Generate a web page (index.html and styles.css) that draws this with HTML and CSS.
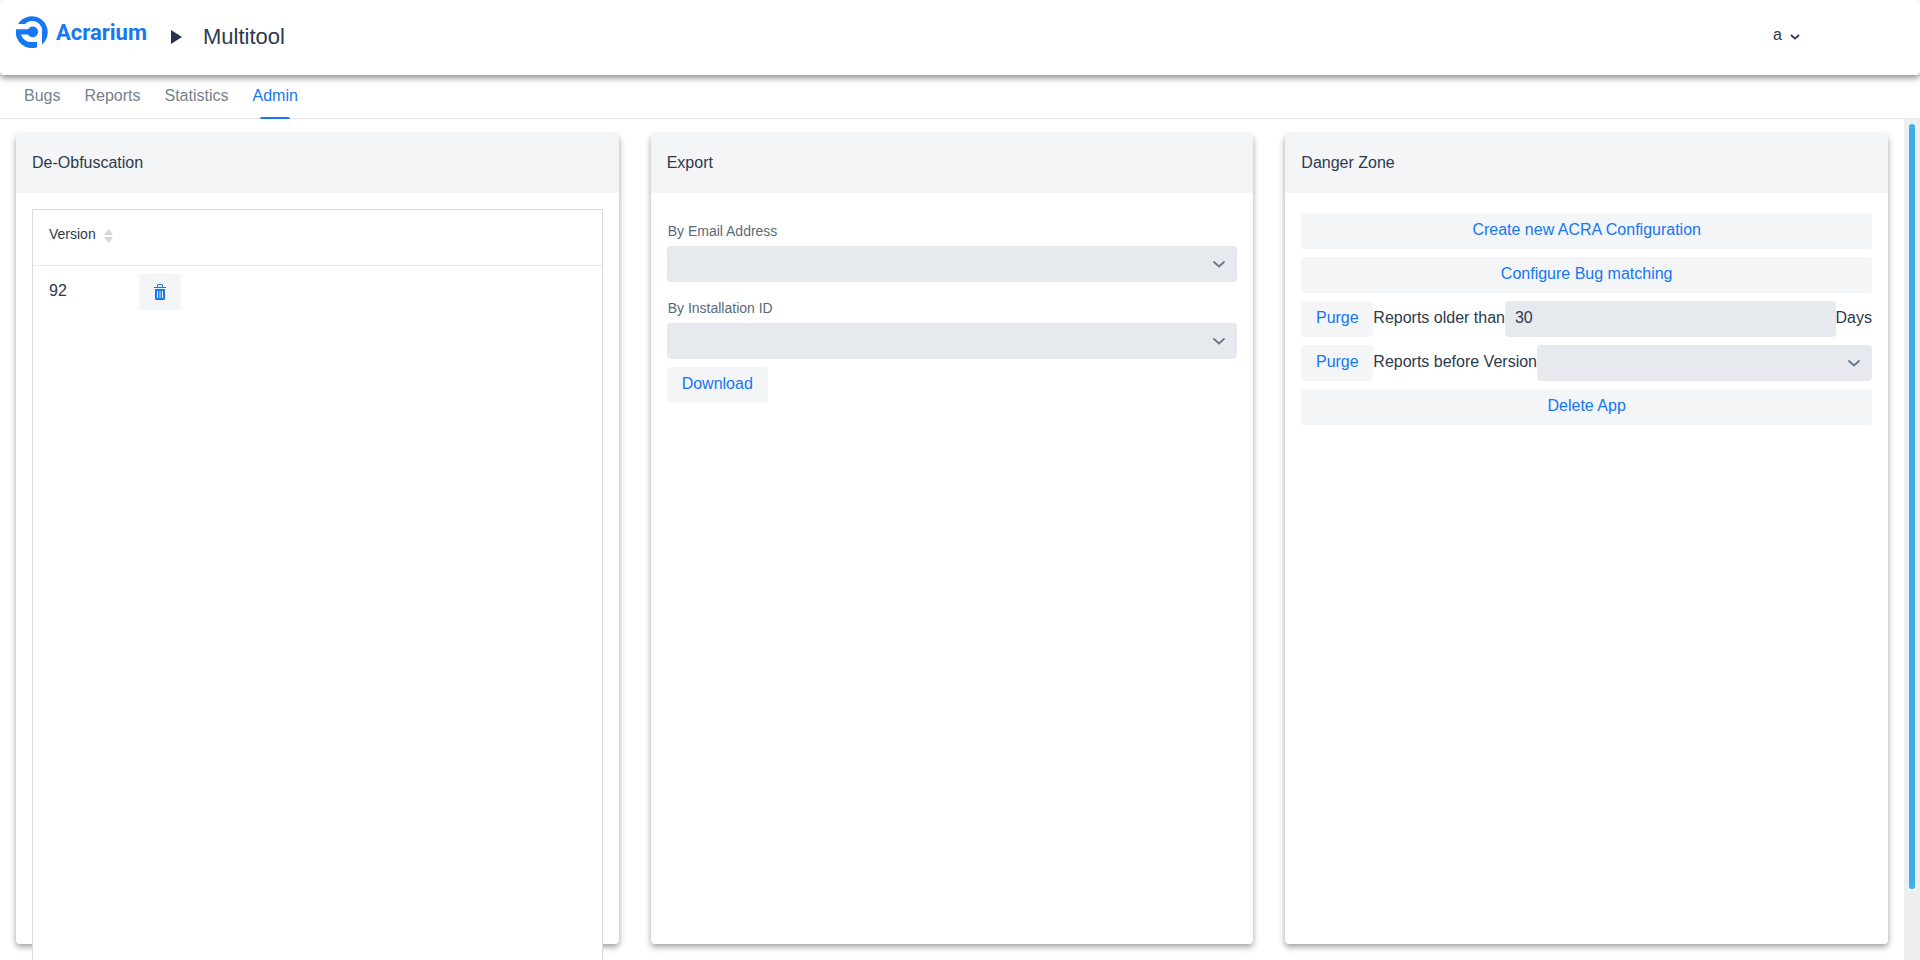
FILE: index.html
```html
<!DOCTYPE html>
<html lang="en">
<head>
<meta charset="utf-8">
<title>Acrarium</title>
<link rel="stylesheet" href="styles.css">
</head>
<body>
<header class="topbar">
  <a class="brand" href="#">
    <svg class="brand-mark" viewBox="0 0 32 32" aria-hidden="true">
      <path d="M2 8A16 16 0 1 1 26 28.500V17A10 10 0 0 0 9 8Z" fill="#1676f3"/>
      <path d="M0 13.300H12A5.400 5.400 0 1 1 12 18.500H5A10.800 10.800 0 0 0 16 26H21V31.200A16 16 0 0 1 0 13.300Z" fill="#1676f3"/>
    </svg>
    <span class="brand-name">Acrarium</span>
  </a>
  <svg class="crumb-arrow" viewBox="0 0 11 14" aria-hidden="true"><path d="M0 0L11 7L0 14Z" fill="#25344a"/></svg>
  <a class="crumb" href="#">Multitool</a>
  <button class="user" type="button">a
    <svg class="user-chevron" viewBox="0 0 10 6" aria-hidden="true"><path d="M1 1L5 4.600L9 1" fill="none" stroke="#25344a" stroke-width="1.700"/></svg>
  </button>
</header>
<nav class="tabs">
  <a class="tab" href="#">Bugs</a>
  <a class="tab" href="#">Reports</a>
  <a class="tab" href="#">Statistics</a>
  <a class="tab tab-active" href="#" aria-current="page">Admin</a>
</nav>
<div class="viewport">
  <main class="cards">
    <section class="card">
      <h2 class="card-title">De-Obfuscation</h2>
      <div class="card-body card-body-grid">
        <div class="grid">
          <table class="versions">
            <thead>
              <tr>
                <th class="col-version" scope="col">
                  <span class="sort">Version
                    <svg class="sorter" viewBox="0 0 9 14" aria-hidden="true"><path d="M0 6L4.500 0L9 6ZM0 8H9L4.500 14Z" fill="#d3d6da"/></svg>
                  </span>
                </th>
                <th></th>
              </tr>
            </thead>
            <tbody>
              <tr>
                <td class="version">92</td>
                <td>
                  <button class="button icon-button" type="button" aria-label="Delete version 92">
                    <svg class="trash" viewBox="0 0 12 16" aria-hidden="true">
                      <path d="M0 3H3V1.500Q3 0 4.500 0H7.500Q9 0 9 1.500V3H12V4H0ZM4 1.500V3H8V1.500Q8 1 7.500 1H4.500Q4 1 4 1.500Z" fill="#1676f3" fill-rule="evenodd"/>
                      <path d="M1 5H11V14.500Q11 16 9.500 16H2.500Q1 16 1 14.500ZM3 7V14H4V7ZM5.500 7V14H6.500V7ZM8 7V14H9V7Z" fill="#1676f3" fill-rule="evenodd"/>
                    </svg>
                  </button>
                </td>
              </tr>
            </tbody>
          </table>
        </div>
      </div>
    </section>
    <section class="card">
      <h2 class="card-title">Export</h2>
      <div class="card-body export">
        <label class="label" for="email">By Email Address</label>
        <div class="combo">
          <select class="field" id="email"><option></option></select>
          <svg class="chevron" viewBox="0 0 12 7" aria-hidden="true"><path d="M1 1L6 5.500L11 1" fill="none" stroke="#677689" stroke-width="1.800" stroke-linecap="round"/></svg>
        </div>
        <label class="label" for="installation">By Installation ID</label>
        <div class="combo">
          <select class="field" id="installation"><option></option></select>
          <svg class="chevron" viewBox="0 0 12 7" aria-hidden="true"><path d="M1 1L6 5.500L11 1" fill="none" stroke="#677689" stroke-width="1.800" stroke-linecap="round"/></svg>
        </div>
        <button class="button download" type="button">Download</button>
      </div>
    </section>
    <section class="card">
      <h2 class="card-title">Danger Zone</h2>
      <div class="card-body danger">
        <button class="button" type="button">Create new ACRA Configuration</button>
        <button class="button" type="button">Configure Bug matching</button>
        <div class="row">
          <button class="button" type="button">Purge</button>
          <label class="row-text" for="age">Reports older than</label>
          <input class="field" id="age" type="text" value="30">
          <span class="row-text">Days</span>
        </div>
        <div class="row">
          <button class="button" type="button">Purge</button>
          <label class="row-text" for="before">Reports before Version</label>
          <div class="combo">
            <select class="field" id="before"><option></option></select>
            <svg class="chevron" viewBox="0 0 12 7" aria-hidden="true"><path d="M1 1L6 5.500L11 1" fill="none" stroke="#677689" stroke-width="1.800" stroke-linecap="round"/></svg>
          </div>
        </div>
        <button class="button" type="button">Delete App</button>
      </div>
    </section>
  </main>
  <div class="scrollbar" aria-hidden="true"><div class="thumb"></div></div>
</div>
</body>
</html>
```
FILE: styles.css
```css
* {
  box-sizing: border-box;
}

body {
  display: flex;
  flex-direction: column;
  height: 100vh;
  margin: 0;
  overflow: hidden;
  background: #fff;
  color: #2c3a4d;
  font: 16px/26px "Liberation Sans", Arial, sans-serif;
}

a {
  color: inherit;
  text-decoration: none;
}

button,
input,
select {
  font: inherit;
}

/* Top bar */
.topbar {
  display: flex;
  flex: none;
  align-items: center;
  height: 75px;
  padding: 0 116px 3px 16px;
  border-radius: 4px;
  background: #fff;
  box-shadow: 0 3px 6px rgba(0, 0, 0, 0.45);
  position: relative;
}

.brand {
  display: flex;
  align-items: center;
  gap: 8px;
  padding-bottom: 8px;
  color: #1676f3;
}

.brand-mark {
  width: 32px;
  height: 32px;
}

.brand-name {
  padding-top: 2px;
  font: 700 22px/30px Roboto, sans-serif;
}

.crumb-arrow {
  width: 11px;
  height: 14px;
  margin: 2px 21px 0 24px;
}

.crumb {
  padding-top: 1px;
  font-size: 22px;
}

.user {
  display: flex;
  align-items: center;
  gap: 8px;
  margin-left: auto;
  padding: 0 4px 2px;
  border: 0;
  background: none;
  color: #2c3a4d;
}

.user-chevron {
  width: 10px;
  height: 6px;
  margin-top: 4px;
}

/* Tabs */
.tabs {
  display: flex;
  flex: none;
  height: 44px;
  padding: 0 12px;
  border-bottom: 1px solid #e6e9ee;
}

.tab {
  position: relative;
  padding: 8px 12px 9px;
  color: #75818f;
}

.tab-active {
  color: #1676f3;
}

.tab-active::after {
  position: absolute;
  bottom: -1px;
  left: 50%;
  width: 30px;
  height: 2px;
  margin-left: -15px;
  border-radius: 2px 2px 0 0;
  background: #1676f3;
  content: "";
}

/* Scrolling area */
.viewport {
  display: flex;
  flex: 1;
  min-height: 0;
  overflow: hidden;
}

.cards {
  display: grid;
  flex: 1;
  grid-template-columns: repeat(3, minmax(0, 1fr));
  grid-template-rows: minmax(0, 1fr);
  gap: 32px;
  padding: 15px 16px 16px;
}

.scrollbar {
  display: flex;
  flex-direction: column;
  width: 16px;
  padding: 5px;
  background: #eeeff1;
}

.thumb {
  width: 6px;
  height: 92%;
  border-radius: 3px;
  background: #3daee9;
}

/* Cards */
.card {
  display: flex;
  flex-direction: column;
  border-radius: 4px;
  background: #fff;
  box-shadow: 0 3px 6px rgba(0, 0, 0, 0.38);
}

.card-title {
  margin: 0;
  padding: 16px 16px 17px;
  border-radius: 4px 4px 0 0;
  background: #f3f5f7;
  font-size: 16px;
  font-weight: 400;
}

.card-body {
  flex: 1;
  min-height: 0;
  padding: 16px;
}

.card-body-grid {
  padding-bottom: 0;
}

.grid {
  height: 110%;
  border: 1px solid #d9dce1;
  background: #fff;
}

.versions {
  width: 100%;
  border-collapse: separate;
  border-spacing: 0;
  table-layout: fixed;
}

.versions th,
.versions td {
  padding: 0 16px;
  text-align: left;
}

.versions th {
  height: 56px;
  padding-bottom: 8px;
  border-bottom: 1px solid #e6e9ee;
  font-size: 14px;
  font-weight: 400;
}

.versions td {
  height: 52px;
}

.versions .version {
  padding-bottom: 2px;
}

.versions .col-version {
  width: 90px;
  padding-right: 0;
}

.sort {
  display: flex;
  align-items: center;
  gap: 8px;
}

.sorter {
  width: 9px;
  height: 14px;
  margin-top: 4px;
}

/* Controls */
.button {
  height: 36px;
  padding: 0 14px 2px;
  border: 0;
  border-radius: 4px;
  background: #f3f5f7;
  color: #1676f3;
}

.icon-button {
  display: block;
  padding: 0 15px;
}

.trash {
  display: block;
  width: 12px;
  height: 16px;
}

.field {
  display: block;
  width: 100%;
  min-width: 0;
  height: 36px;
  padding: 0 10px 2px;
  border: 0;
  border-radius: 4px;
  appearance: none;
  background: #e6e9ee;
  color: #2c3a4d;
}

.combo {
  position: relative;
  flex: 1;
}

.chevron {
  position: absolute;
  top: 15px;
  right: 12px;
  width: 12px;
  height: 7px;
  pointer-events: none;
}

.export {
  display: flex;
  flex-direction: column;
}

.export .combo {
  flex: none;
}

.label {
  padding: 12px 1px 5px;
  color: #5b697b;
  font-size: 14px;
  line-height: 20px;
}

.combo + .label {
  padding-top: 16px;
}

.download {
  align-self: flex-start;
  margin-top: 8px;
  padding: 0 15px 2px;
}

.danger {
  display: flex;
  flex-direction: column;
  gap: 8px;
  padding-top: 20px;
}

.row {
  display: flex;
}

.row .button {
  flex: none;
  min-width: 72px;
}

.row .field {
  flex: 1;
}

.row-text {
  flex: none;
  padding-top: 4px;
}
```
